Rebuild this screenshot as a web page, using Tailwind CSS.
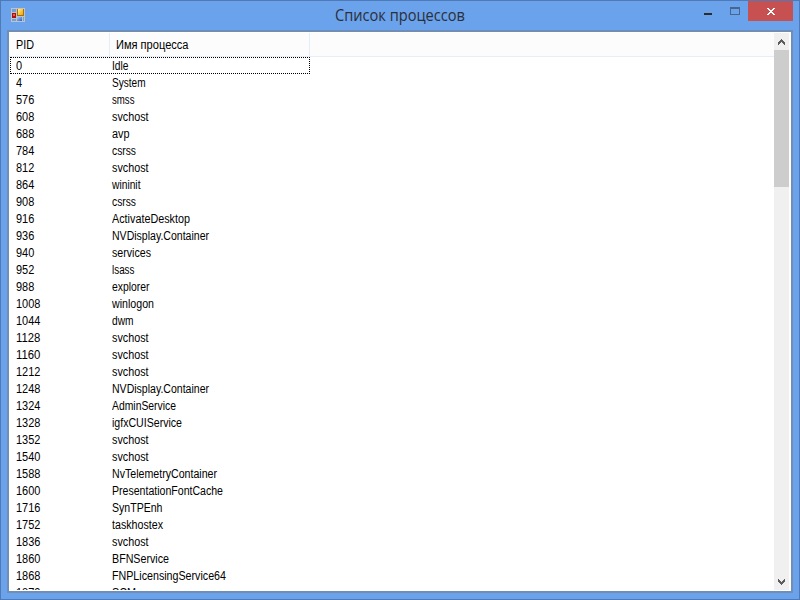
<!DOCTYPE html>
<html lang="ru">
<head>
<meta charset="utf-8">
<title>Список процессов</title>
<script src="https://cdn.jsdelivr.net/npm/@tailwindcss/browser@4"></script>
</head>
<body class="overflow-hidden">
<div class="flex h-[600px] w-[800px] flex-col border border-[#4f7ab5] bg-[#6aa2ec]">
  <header class="grid h-[29px] shrink-0 grid-cols-[1fr_auto_1fr] items-start">
    <svg class="mt-[7px] ml-[10px]" width="14" height="14" viewBox="0 0 14 14" shape-rendering="crispEdges">
      <defs>
        <linearGradient id="y" x1="0" y1="0" x2="1" y2="1"><stop offset="0" stop-color="#fff0a0"/><stop offset=".5" stop-color="#fcc83a"/><stop offset="1" stop-color="#e5a714"/></linearGradient>
        <linearGradient id="b" x1="0" y1="0" x2="1" y2="1"><stop offset="0" stop-color="#a8c8ff"/><stop offset="1" stop-color="#2862c8"/></linearGradient>
      </defs>
      <path fill="#c0c2c4" d="M0 0h14v14H0z"/>
      <path fill="#6f9fdc" d="M1 1h4v3H1zM1 11h4v2H1zM12 9h1v4h-1z"/>
      <path fill="#a51412" d="M1 5h4v5H1z"/><path fill="#e85a4a" d="M2 6h2v2H2z"/>
      <path fill="#a86f10" d="M6 1h7v7H6z"/><path fill="url(#y)" d="M7 1h5v6H7z"/>
      <path fill="url(#b)" d="M6 9h5v4H6z"/>
    </svg>
    <h1 class="mt-[3px] w-[131px] whitespace-nowrap font-['Open_Sans','Noto_Sans',sans-serif] text-[16px] leading-[22px] text-[#2b2f38]"><span class="inline-block origin-left" data-font='16px "Open Sans"' data-w="130">Список процессов</span></h1>
    <div class="flex h-5 justify-end pr-[6px]">
      <svg width="42" height="20" viewBox="0 0 42 20" shape-rendering="crispEdges" class="mr-[5px]">
        <path fill="#2b2b2b" d="M3 12h8v2H3z"/>
        <path fill="#48658e" fill-rule="evenodd" d="M29 6h10v8H29zM30 8v5h8V8z"/>
      </svg>
      <div class="flex w-[45px] items-center justify-center bg-[#c75050]">
        <svg width="8" height="7" viewBox="0 0 8 7" shape-rendering="crispEdges" fill="#fff"><path d="M0 0h2v1h1v1h2V1h1V0h2v1H7v1H6v1H5v1h1v1h1v1h1v1H6V6H5V5H3v1H2v1H0V6h1V5h1V4h1V3H2V2H1V1H0z"/></svg>
      </div>
    </div>
  </header>
  <main class="mx-[6px] flex h-[563px] w-[786px] border-2 border-[#6f8db5] bg-white pt-px pr-[2px] pb-px font-['Liberation_Sans',Arial,sans-serif] text-[12px] text-black">
    <section class="flex min-w-0 flex-1 flex-col overflow-hidden">
      <div class="flex h-6 shrink-0 border-b border-[#e4eefa] bg-[#fcfcfc] leading-[24px] whitespace-nowrap">
        <div class="w-[101px] border-r border-[#e4eefa] pl-[7px]"><span class="inline-block origin-left" data-w="18">PID</span></div>
        <div class="w-[200px] border-r border-[#e4eefa] pl-[6px]"><span class="inline-block origin-left" data-w="72.5">Имя процесса</span></div>
      </div>
      <div id="rows" class="min-h-0 flex-1 overflow-hidden whitespace-nowrap"></div>
    </section>
    <aside class="flex w-[15px] flex-col bg-[#f0f0f0]">
      <svg class="shrink-0" width="15" height="17" viewBox="0 0 15 17" shape-rendering="crispEdges"><path fill="#5d5d5d" d="M7 6h1v1h1v1h1v1h1v3h-1v-1H9v-1H8V9H7v1H6v1H5v1H4V9h1V8h1V7h1z"/></svg>
      <div class="h-[137px] bg-[#cdcdcd]"></div>
      <div class="flex-1"></div>
      <svg class="shrink-0" width="15" height="17" viewBox="0 0 15 17" shape-rendering="crispEdges"><path fill="#5d5d5d" d="M4 6h1v1h1v1h1v1h1V8h1V7h1V6h1v3h-1v1H9v1H8v1H7v-1H6v-1H5V9H4z"/></svg>
    </aside>
  </main>
</div>
<script>
const rows = [[0,'Idle',16.5],[4,'System',33.5],[576,'smss',22.5],[608,'svchost',36.5],[688,'avp',17.5],[784,'csrss',24],[812,'svchost',36.5],[864,'wininit',28.5],[908,'csrss',24],[916,'ActivateDesktop',78],[936,'NVDisplay.Container',97],[940,'services',39],[952,'lsass',22.5],[988,'explorer',37.5],[1008,'winlogon',42],[1044,'dwm',21.5],[1128,'svchost',36.5],[1160,'svchost',36.5],[1212,'svchost',36.5],[1248,'NVDisplay.Container',97],[1324,'AdminService',64],[1328,'igfxCUIService',70],[1352,'svchost',36.5],[1540,'svchost',36.5],[1588,'NvTelemetryContainer',105],[1600,'PresentationFontCache',111],[1716,'SynTPEnh',50.5],[1752,'taskhostex',51],[1836,'svchost',36.5],[1860,'BFNService',57],[1868,'FNPLicensingService64',114],[1872,'SCM',24]];
document.getElementById('rows').innerHTML = rows.map(([pid, name, w], i) =>
  `<div class="flex h-[17px] ${i ? 'pl-[7px] leading-[19px]' : 'ml-px w-[300px] border border-dotted border-black pl-[5px] leading-[16px]'}"><div class="w-24 shrink-0"><span class="inline-block origin-left" data-w="${String(pid).length * 6.1}">${pid}</span></div><div><span class="inline-block origin-left" data-w="${w}">${name}</span></div></div>`).join('');
const ctx = document.createElement('canvas').getContext('2d');
for (const el of document.querySelectorAll('[data-w]')) {
  ctx.font = el.dataset.font || '12px "Liberation Sans"';
  el.style.transform = `scaleX(${el.dataset.w / ctx.measureText(el.textContent).width})`;
}
</script>
</body>
</html>
